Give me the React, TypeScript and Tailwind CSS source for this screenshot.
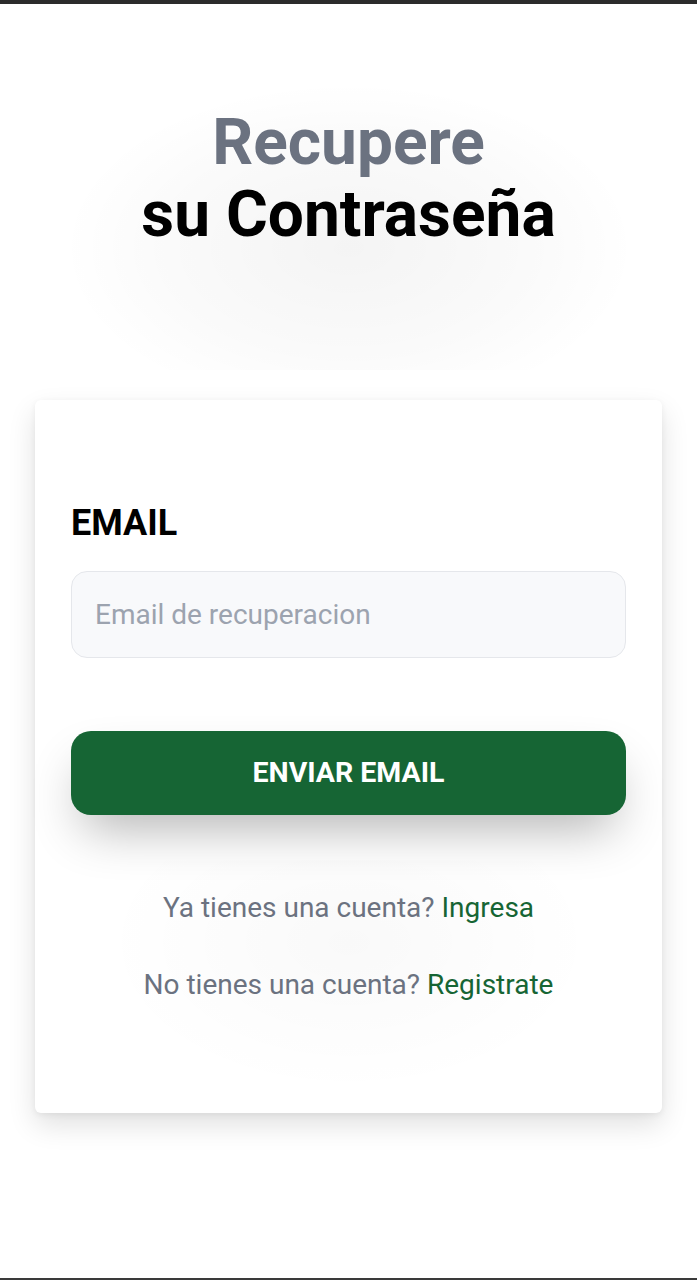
export default function App() {
  return (
    <div className="min-h-[1280px] flex flex-col bg-white font-['Roboto',sans-serif]">
      <div className="h-[4px] bg-[#2b2b2b]" />

      <div className="mx-auto mt-[76px] w-[580px] h-[290px] pt-[27px] text-center bg-[radial-gradient(ellipse_at_50%_58%,rgba(0,0,0,0.045),rgba(0,0,0,0.02)_45%,transparent_70%)]">
        <h1 className="text-[64px] leading-[72px] font-bold">
          <span className="text-[#6b7280]">Recupere</span>
          <br />
          <span className="text-black">su Contraseña</span>
        </h1>
      </div>

      <div className="mx-[35px] mt-[30px] rounded-md bg-white px-9 pt-[103px] pb-[18px] shadow-[0_12px_28px_rgba(0,0,0,0.12),0_2px_6px_rgba(0,0,0,0.06)]">
        <label className="block text-[36px] leading-[40px] font-bold text-black">EMAIL</label>
        <input
          type="email"
          placeholder="Email de recuperacion"
          className="mt-[28px] block w-full h-[87px] rounded-2xl border border-[#e5e7eb] bg-[#f8f9fb] px-[23px] text-[28px] text-gray-700 placeholder:text-[#9ca3af] outline-none"
        />
        <button className="mt-[73px] block w-full h-[84px] rounded-[20px] bg-[#166534] text-white text-[28.5px] font-bold shadow-[0_25px_50px_-12px_rgba(0,0,0,0.3)]">
          ENVIAR EMAIL
        </button>

        <div className="mx-auto mt-[45px] w-[500px] pt-[28px] pb-[90px] text-center text-[28px] leading-[40px] text-[#6b7280] bg-[radial-gradient(ellipse_at_50%_35%,rgba(0,0,0,0.025),transparent_70%)]">
          <p>
            Ya tienes una cuenta? <a href="#" className="text-[#166534]">Ingresa</a>
          </p>
          <p className="mt-[37px]">
            No tienes una cuenta? <a href="#" className="text-[#166534]">Registrate</a>
          </p>
        </div>
      </div>

      <div className="flex-1" />
      <div className="h-[2px] bg-[#3a3a3a]" />
    </div>
  );
}
